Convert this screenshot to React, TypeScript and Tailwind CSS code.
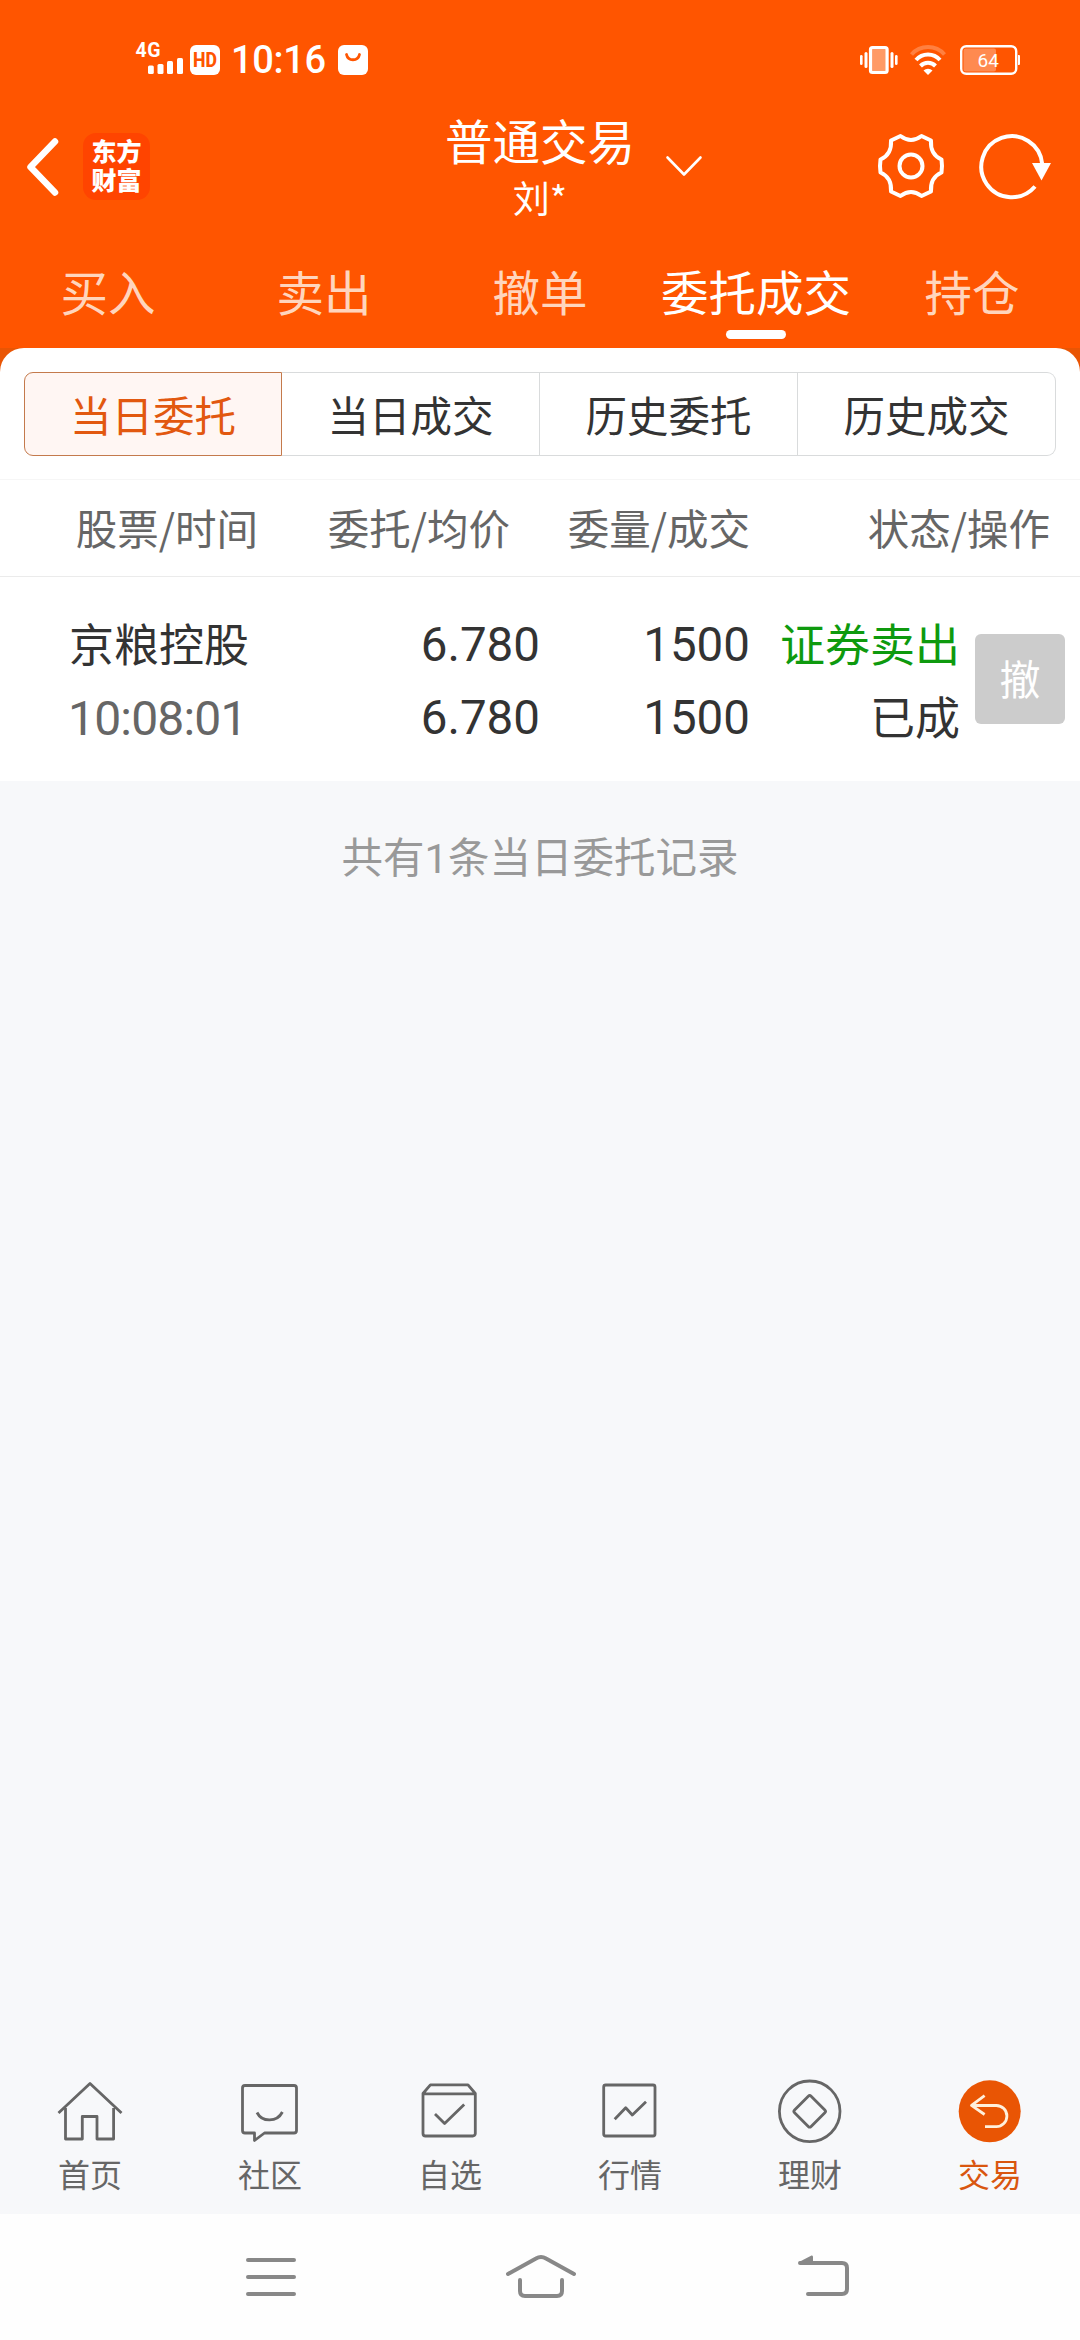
import React from 'react';
import clsx from 'clsx';

const tabs = ['买入', '卖出', '撤单', '委托成交', '持仓'];
const segments = ['当日委托', '当日成交', '历史委托', '历史成交'];
const columns = ['股票/时间', '委托/均价', '委量/成交', '状态/操作'];

const StatusBar: React.FC = () => (
  <div className="flex h-[117px] items-center justify-between pt-[3px] pl-[135px] pr-[59px]">
    <div className="flex items-center">
      <svg className="overflow-visible" width="85" height="44" viewBox="135 38 85 44" fill="#fff">
        <text x="135.5" y="57" fontFamily="Roboto" fontWeight="700" fontSize="19.5" textLength="25">
          4G
        </text>
        <rect x="148" y="65.5" width="5.8" height="8.5" rx="1.5" />
        <rect x="157.5" y="64" width="6" height="10" rx="1.5" />
        <rect x="167" y="61" width="6" height="13" rx="1.5" />
        <rect x="177" y="58" width="6" height="16" rx="1.5" />
        <rect x="190" y="45" width="30" height="30" rx="6" />
        <text
          x="193"
          y="67"
          fill="#ff5500"
          fontFamily="Roboto"
          fontWeight="800"
          fontSize="19.5"
          textLength="24"
          lengthAdjust="spacingAndGlyphs"
        >
          HD
        </text>
      </svg>
      <span className="ml-[11px] w-[107px] font-[Roboto] text-[38px] leading-[32px] font-medium tracking-[-0.3px]">
        10:16
      </span>
      <svg width="30" height="30" viewBox="0 0 30 30">
        <rect width="30" height="30" rx="6" fill="#fff" />
        <path d="M8.5 9.5c1.5 7 11.5 7 13 0" fill="none" stroke="#ff5500" strokeWidth="2.8" strokeLinecap="round" />
      </svg>
    </div>
    <svg width="162" height="32" viewBox="859 44 162 32" fill="#fff">
      <rect x="860" y="55" width="2.6" height="10" rx="1.3" />
      <rect x="864.5" y="52" width="3" height="16" rx="1.5" />
      <rect x="890.5" y="52" width="3" height="16" rx="1.5" />
      <rect x="895" y="55" width="2.6" height="10" rx="1.3" />
      <rect x="870.5" y="47.5" width="16.6" height="25" rx="2" fill="#ff9a66" stroke="#fff" strokeWidth="3.2" />
      {/* wifi */}
      <path d="M911.5 54.5a22 22 0 0 1 33 0" fill="none" stroke="#ff8040" strokeWidth="4" />
      <g fill="none" stroke="#fff" strokeWidth="4">
        <path d="M916 60a16 16 0 0 1 24 0" />
        <path d="M920.500 66a10.500 10.500 0 0 1 15 0" />
      </g>
      <path d="M928 75l-4.500-4.500a6.500 6.500 0 0 1 9 0z" />
      {/* battery */}
      <rect x="961.2" y="46.2" width="55" height="27.6" rx="5" fill="none" stroke="#fff" strokeWidth="2.4" />
      <rect x="963.5" y="48.5" width="32.5" height="23" rx="2" fill="#ff8a50" />
      <path d="M1018 55h1a1 1 0 0 1 1 1v8a1 1 0 0 1-1 1h-1z" />
      <text x="977.500" y="67" fontFamily="Roboto" fontSize="19">
        64
      </text>
    </svg>
  </div>
);

const TitleBar: React.FC = () => (
  <div className="grid h-[98px] grid-cols-[444px_192px_1fr]">
    <div className="flex items-center pl-[24px]">
      <svg width="36" height="62" viewBox="0 0 36 62" fill="none" stroke="#fff" strokeWidth="6.5">
        <path d="M31 6.5L6.5 32 31 57.5" strokeLinecap="round" strokeLinejoin="round" />
      </svg>
      <div className="ml-[23px] h-[67px] w-[67px] rounded-[13px] bg-[#ff4400] pt-[3px] text-center font-['Noto_Sans_CJK_SC'] text-[25px] leading-[29px] font-black">
        东方
        <br />
        财富
      </div>
    </div>
    <div className="flex flex-col items-center whitespace-nowrap">
      <h1 className="text-[47.5px] leading-[45px]">普通交易</h1>
      <p className="mt-[18px] text-[37px] leading-[35px]">刘*</p>
    </div>
    <div className="flex items-center">
      <svg className="ml-[28px]" width="40" height="24" viewBox="0 0 40 24" fill="none" stroke="#fff" strokeWidth="2.6">
        <path d="M3.5 3.5L20 20.5 36.5 3.5" strokeLinecap="round" strokeLinejoin="round" />
      </svg>
      <svg className="ml-[171px]" width="72" height="72" viewBox="-36 -36 72 72" fill="none" stroke="#fff" strokeWidth="4">
        <circle r="11.5" />
        <path
          d="M-10.5 -30Q0 -22 10.5 -30L20 -25.500Q19 -11.5 30.500 -6.5Q31.500 0 30.500 6.5Q19 11.5 20 25.500L10.5 30Q0 22 -10.5 30L-20 25.500Q-19 11.5 -30.500 6.5Q-31.500 0 -30.500 -6.5Q-19 -11.5 -20 -25.500Z"
          strokeLinejoin="round"
        />
      </svg>
      <svg className="ml-[28px]" width="78" height="72" viewBox="-37 -36 78 72" fill="none" stroke="#fff" strokeWidth="4">
        <path d="M23 20.5A30.5 30.5 0 1 1 30.2 -2" />
        <path d="M20 -3h19L29.5 14.5z" fill="#fff" stroke="none" />
      </svg>
    </div>
  </div>
);

const Tabs: React.FC = () => (
  <div className="grid h-[133px] grid-cols-5">
    {tabs.map((tab) => {
      const active = tab === '委托成交';
      return (
        <div key={tab} className="flex flex-col items-center pt-[48px]">
          <span
            className={clsx('text-[47.5px] leading-[56px] whitespace-nowrap', active ? 'text-white' : 'text-[#ffd5bd]')}
          >
            {tab}
          </span>
          {active && <i className="mt-[11px] h-[9px] w-[60px] rounded-full bg-white" />}
        </div>
      );
    })}
  </div>
);

const Segments: React.FC = () => (
  <div className="mx-[24px] grid h-[84px] grid-cols-4 text-center text-[41.5px] leading-[77px]">
    {segments.map((label, i) => (
      <button
        key={label}
        className={clsx(
          'border',
          i === 0 && 'rounded-l-[9px] border-[#c47a4c] bg-[#fff6f3] text-[#e2580f]',
          i > 0 && 'border-[#d9dbdc] text-[#333]',
          i > 0 && i < 3 && 'border-l-0',
          i === 3 && 'rounded-r-[9px] border-l-0',
        )}
      >
        {label}
      </button>
    ))}
  </div>
);

const Orders: React.FC = () => (
  <>
    <div className="mt-[23px] grid h-[98px] grid-cols-[258px_252px_240px_300px] border-y border-t-[#f6f6f6] border-b-[#ebebeb] text-right text-[41.5px] leading-[95px] text-[#666]">
      {columns.map((c) => (
        <span key={c}>{c}</span>
      ))}
    </div>
    <div className="grid h-[204px] grid-cols-[300px_240px_210px_210px_1fr] text-[45px] leading-[73px] text-[#333]">
      <div className="pt-[29px] pl-[69px]">
        <p>京粮控股</p>
        <p className="-ml-px pt-[3px] font-[Roboto] text-[48px] tracking-[-0.8px] text-[#666]">10:08:01</p>
      </div>
      <div className="pt-[32px] text-right font-[Roboto] text-[47.5px]">
        <p>6.780</p>
        <p>6.780</p>
      </div>
      <div className="pt-[32px] text-right font-[Roboto] text-[47.5px]">
        <p>1500</p>
        <p>1500</p>
      </div>
      <div className="pt-[29px] text-right">
        <p className="text-[#0e9a0e]">证券卖出</p>
        <p>已成</p>
      </div>
      <button className="mt-[57px] ml-[15px] h-[90px] w-[90px] rounded-[6px] bg-[#ccc] pb-[3px] text-[41px] leading-[87px] text-white">
        撤
      </button>
    </div>
  </>
);

const navItems: { label: string; icon: React.ReactNode; active?: boolean }[] = [
  {
    label: '首页',
    icon: (
      <>
        <path d="M4.5 38L36 8.5 67.5 38" />
        <path d="M11.5 33V64H28.3V41.5H43V64H59.6V33" />
      </>
    ),
  },
  {
    label: '社区',
    icon: (
      <>
        <path d="M11 10.5H60a2.5 2.5 0 0 1 2.5 2.5V55.5a2.5 2.5 0 0 1-2.5 2.5H30.5L20.5 65.5V58H11a2.5 2.5 0 0 1-2.5-2.5V13a2.5 2.5 0 0 1 2.5-2.5z" />
        <path d="M23 37.5C28 47.5 43 47.5 48.4 37" />
      </>
    ),
  },
  {
    label: '自选',
    icon: (
      <>
        <path d="M9 18.5L16.4 9.8H54L61.3 18.5V58.5a2.5 2.5 0 0 1-2.5 2.5H11.5a2.5 2.5 0 0 1-2.5-2.5zM9 18.8H61" />
        <path d="M21 39L30.6 48.5 50.2 29.5" />
      </>
    ),
  },
  {
    label: '行情',
    icon: (
      <>
        <rect x="9.7" y="10" width="51.3" height="51" rx="2" />
        <path d="M20.7 44.3L31.7 32.7 38.3 40 52 26.7" />
      </>
    ),
  },
  {
    label: '理财',
    icon: (
      <>
        <circle cx="35.7" cy="36.3" r="30.3" />
        <rect x="24" y="24.6" width="23.4" height="23.4" rx="2" transform="rotate(45 35.7 36.3)" />
      </>
    ),
  },
  {
    label: '交易',
    active: true,
    icon: (
      <>
        <circle cx="35.7" cy="36.3" r="31" fill="#e95504" stroke="none" />
        <path d="M30.6 20.7L17.5 30.3 30.6 39.5M18 30.5H42.3a10.6 10.6 0 0 1 0 21.2H31" stroke="#fff0dc" />
      </>
    ),
  },
];

const BottomNav: React.FC = () => (
  <nav className="grid grid-cols-6 pb-[21px]">
    {navItems.map(({ label, icon, active }) => (
      <div key={label} className={clsx('flex flex-col items-center', active ? 'text-[#d9560f]' : 'text-[#666]')}>
        <svg width="72" height="72" viewBox="0 0 72 72" fill="none" stroke="currentColor" strokeWidth="2.8" strokeLinejoin="round">
          {icon}
        </svg>
        <span className="mt-[6px] text-[32px] leading-[40px]">{label}</span>
      </div>
    ))}
  </nav>
);

const SystemNav: React.FC = () => (
  <div className="flex h-[126px] items-center bg-[#fefefe] pb-[2px] pl-[243px] text-[#888]">
    <svg width="56" height="48" viewBox="243 2252 56 48" stroke="currentColor" strokeWidth="4" strokeLinecap="round">
      <path d="M248 2260H294M248 2277H294M248 2294H294" />
    </svg>
    <svg className="ml-[204px]" width="76" height="48" viewBox="503 2252 76 48" fill="none" stroke="currentColor" strokeWidth="4" strokeLinecap="round">
      <path d="M508 2274L536 2258.5Q541 2255.5 546 2258.5L574 2274" />
      <path d="M520 2280V2291Q520 2296 525 2296H557Q562 2296 562 2291V2280" />
    </svg>
    <svg className="ml-[217px]" width="56" height="48" viewBox="796 2252 56 48" fill="none" stroke="currentColor" strokeWidth="4" strokeLinecap="round">
      <path d="M800 2263H842Q847 2263 847 2268V2289Q847 2294 842 2294H808" />
      <path d="M799 2262L811.5 2255.5Q813 2255 813 2257V2263H799z" fill="currentColor" stroke="none" />
    </svg>
  </div>
);

export default function App() {
  return (
    <div className="flex h-[2340px] w-[1080px] flex-col overflow-hidden bg-[#f7f8fa] font-['Noto_Sans_CJK_SC',sans-serif]">
      <header className="bg-[#ff5500] text-white">
        <StatusBar />
        <TitleBar />
        <Tabs />
      </header>
      <section className="bg-[#e95504]">
        <div className="rounded-t-[24px] bg-white pt-[24px]">
          <Segments />
          <Orders />
        </div>
      </section>
      <p className="mt-[44px] flex-1 text-center text-[41.5px] leading-[60px] text-[#999]">
        共有<span className="font-[Roboto]">1</span>条当日委托记录
      </p>
      <BottomNav />
      <SystemNav />
    </div>
  );
}
